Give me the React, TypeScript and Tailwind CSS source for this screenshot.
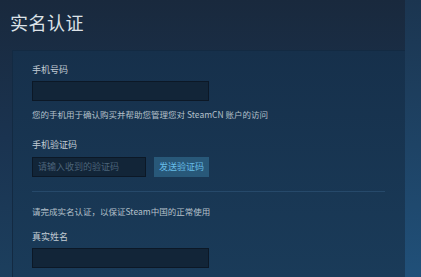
import React from 'react';

const cjk = { fontFamily: '"Noto Sans CJK SC", "Noto Sans", sans-serif' };

function Field({ placeholder, className }: { placeholder?: string; className: string }) {
  return (
    <div
      className={`h-[20px] bg-[#122538] border border-[#0c1826] flex items-center px-[5px] text-[9px] text-[#4c647a] ${className}`}
    >
      {placeholder}
    </div>
  );
}

export default function App() {
  return (
    <div
      className="w-[421px] h-[277px] overflow-hidden flex bg-gradient-to-b from-[#19293d] via-[#1a3350] to-[#1c3f5e]"
      style={cjk}
    >
      <div className="flex-1 flex flex-col">
        {/* Title */}
        <h1 className="pl-[10px] pt-[10px] text-[18px] leading-[24px] text-[#dde2e7] tracking-[0.5px]">
          实名认证
        </h1>

        {/* Form panel */}
        <div className="ml-[12px] mt-[16px] flex-1 bg-gradient-to-b from-[#16304b] to-[#1a3b59] border-t border-l border-[#132a42] pl-[19px] pt-[14px] flex flex-col">
          <p className="text-[9px] leading-[10px] text-[#c3ccd4]">手机号码</p>
          <Field className="mt-[6px] w-[177px]" />
          <p className="mt-[8px] text-[8.5px] leading-[10px] text-[#b4c0ca]">
            您的手机用于确认购买并帮助您管理您对 SteamCN 账户的访问
          </p>

          <p className="mt-[21px] text-[9px] leading-[10px] text-[#c3ccd4]">手机验证码</p>
          <div className="mt-[7px] flex gap-[8px]">
            <Field className="w-[114px]" placeholder="请输入收到的验证码" />
            <button className="w-[55px] h-[20px] bg-[#285879] text-[9px] text-[#67bde8] flex items-center justify-center">
              发送验证码
            </button>
          </div>

          <div className="mt-[14px] mr-[20px] h-px bg-[#26496a]"></div>

          <p className="mt-[14px] text-[8.5px] leading-[10px] text-[#b4c0ca]">
            请完成实名认证，以保证Steam中国的正常使用
          </p>

          <p className="mt-[16px] text-[9px] leading-[10px] text-[#c3ccd4]">真实姓名</p>
          <Field className="mt-[6px] w-[177px]" />
        </div>
      </div>

      {/* right edge strip */}
      <div className="w-[16px] bg-gradient-to-b from-[#1b3550] to-[#205079]"></div>
    </div>
  );
}
